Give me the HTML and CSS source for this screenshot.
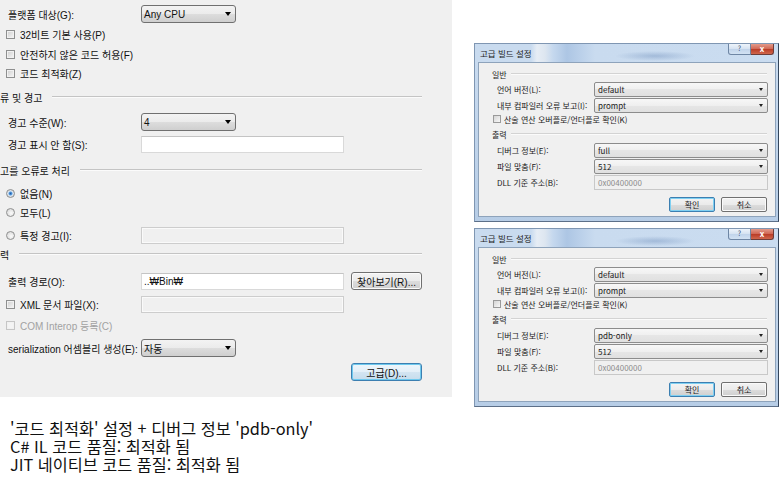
FILE: index.html
```html
<!DOCTYPE html>
<html lang="ko">
<head>
<meta charset="utf-8">
<title>빌드 설정</title>
<link rel="stylesheet" href="styles.css">
</head>
<body>
<div class="page">
  <div class="top">
    <div class="panel">
      <div class="row mt5"><span class="lbl">플랫폼 대상(G):</span><div class="combo"><span>Any CPU</span><i class="arrow"></i></div></div>
      <div class="row cbrow mt2"><span class="cb"></span><span>32비트 기본 사용(P)</span></div>
      <div class="row cbrow mt2"><span class="cb"></span><span>안전하지 않은 코드 허용(F)</span></div>
      <div class="row cbrow mt1"><span class="cb"></span><span>코드 최적화(Z)</span></div>
      <div class="sec mt6"><span>류 및 경고</span><span class="rule"></span></div>
      <div class="row mt7"><span class="lbl">경고 수준(W):</span><div class="combo"><span>4</span><i class="arrow"></i></div></div>
      <div class="row r17 mt5"><span class="lbl">경고 표시 안 함(S):</span><div class="input"></div></div>
      <div class="sec mt8"><span>고를 오류로 처리</span><span class="rule"></span></div>
      <div class="row cbrow mt5"><span class="radio on"></span><span>없음(N)</span></div>
      <div class="row cbrow mt1"><span class="radio"></span><span>모두(L)</span></div>
      <div class="row r17 mt6"><span class="optwrap"><span class="radio"></span><span>특정 경고(I):</span></span><div class="input dis"></div></div>
      <div class="sec mt1"><span>력</span><span class="rule"></span></div>
      <div class="row mt9"><span class="lbl">출력 경로(O):</span><div class="input"><span>..₩Bin₩</span></div><div class="btn">찾아보기(R)...</div></div>
      <div class="row r17 mt6"><span class="optwrap"><span class="cb"></span><span>XML 문서 파일(X):</span></span><div class="input dis"></div></div>
      <div class="row cbrow disabled mt3"><span class="cb"></span><span>COM Interop 등록(C)</span></div>
      <div class="row mt5"><span class="lbl">serialization 어셈블리 생성(E):</span><div class="combo"><span>자동</span><i class="arrow"></i></div></div>
      <div class="row end mt6"><div class="btn focus">고급(D)...</div></div>
    </div>

    <div class="dialogs">
      <div class="dlg">
        <div class="tbar">
          <span class="ttl">고급 빌드 설정</span>
          <div class="capbtns"><span class="help">?</span><span class="close">x</span></div>
        </div>
        <div class="dbody">
          <div class="dsec mt6"><span>일반</span><span class="drule"></span></div>
          <div class="drow mt3"><span class="dlbl">언어 버전(L):</span><div class="dcombo"><span>default</span><i class="darrow"></i></div></div>
          <div class="drow mt1"><span class="dlbl">내부 컴파일러 오류 보고(I):</span><div class="dcombo"><span>prompt</span><i class="darrow"></i></div></div>
          <div class="dcbrow mt1"><span class="dcb"></span><span>산술 연산 오버플로/언더플로 확인(K)</span></div>
          <div class="dsec mt5"><span>출력</span><span class="drule"></span></div>
          <div class="drow mt4"><span class="dlbl">디버그 정보(E):</span><div class="dcombo"><span>full</span><i class="darrow"></i></div></div>
          <div class="drow mt1"><span class="dlbl">파일 맞춤(F):</span><div class="dcombo"><span>512</span><i class="darrow"></i></div></div>
          <div class="drow mt1"><span class="dlbl">DLL 기준 주소(B):</span><div class="dinput"><span>0x00400000</span></div></div>
          <div class="dbtns mt7"><span class="dbtn def">확인</span><span class="dbtn">취소</span></div>
        </div>
      </div>

      <div class="dlg">
        <div class="tbar">
          <span class="ttl">고급 빌드 설정</span>
          <div class="capbtns"><span class="help">?</span><span class="close">x</span></div>
        </div>
        <div class="dbody">
          <div class="dsec mt6"><span>일반</span><span class="drule"></span></div>
          <div class="drow mt3"><span class="dlbl">언어 버전(L):</span><div class="dcombo"><span>default</span><i class="darrow"></i></div></div>
          <div class="drow mt1"><span class="dlbl">내부 컴파일러 오류 보고(I):</span><div class="dcombo"><span>prompt</span><i class="darrow"></i></div></div>
          <div class="dcbrow mt1"><span class="dcb"></span><span>산술 연산 오버플로/언더플로 확인(K)</span></div>
          <div class="dsec mt5"><span>출력</span><span class="drule"></span></div>
          <div class="drow mt4"><span class="dlbl">디버그 정보(E):</span><div class="dcombo"><span>pdb-only</span><i class="darrow"></i></div></div>
          <div class="drow mt1"><span class="dlbl">파일 맞춤(F):</span><div class="dcombo"><span>512</span><i class="darrow"></i></div></div>
          <div class="drow mt1"><span class="dlbl">DLL 기준 주소(B):</span><div class="dinput"><span>0x00400000</span></div></div>
          <div class="dbtns mt7"><span class="dbtn def">확인</span><span class="dbtn">취소</span></div>
        </div>
      </div>
    </div>
  </div>

  <div class="caption">
    <div class="cline">'코드 최적화' 설정 + 디버그 정보 'pdb-only'</div>
    <div class="cline">C# IL 코드 품질: 최적화 됨</div>
    <div class="cline">JIT 네이티브 코드 품질: 최적화 됨</div>
  </div>
</div>
</body>
</html>
```

FILE: styles.css
```css
html, body {
  margin: 0;
  padding: 0;
  background: #ffffff;
}
body {
  font-family: "Noto Sans CJK KR", "Noto Sans", sans-serif;
  color: #000;
}
.page {
  width: 783px;
}
.top {
  display: flex;
  align-items: flex-start;
}

/* ---------- left property panel ---------- */
.panel {
  width: 452px;
  height: 397px;
  box-sizing: border-box;
  background: #f0f0f0;
  font-family: "Liberation Sans", "Noto Sans CJK KR", sans-serif;
  font-size: 10px;
  color: #111;
  display: flex;
  flex-direction: column;
  overflow: hidden;
  white-space: nowrap;
}
.mt1 { margin-top: 1px; }
.mt2 { margin-top: 2px; }
.mt3 { margin-top: 3px; }
.mt4 { margin-top: 4px; }
.mt5 { margin-top: 5px; }
.mt6 { margin-top: 6px; }
.mt7 { margin-top: 7px; }
.mt8 { margin-top: 8px; }
.mt9 { margin-top: 9px; }

.row {
  display: flex;
  align-items: center;
  height: 18px;
  flex: none;
}
.row.r17 { height: 17px; }
.row.end {
  justify-content: flex-end;
  padding-right: 30px;
}
.lbl {
  width: 141px;
  box-sizing: border-box;
  padding-left: 8px;
  flex: none;
}
.cbrow {
  padding-left: 6px;
  gap: 5px;
}
.optwrap {
  width: 141px;
  box-sizing: border-box;
  padding-left: 6px;
  display: flex;
  align-items: center;
  gap: 5px;
  flex: none;
}
.disabled { color: #a2a2a2; }
.disabled .cb {
  border-color: #c6c6c6;
  background: #f4f4f4;
}

.cb {
  width: 9px;
  height: 9px;
  box-sizing: border-box;
  border: 1px solid #8e8f8f;
  background: linear-gradient(135deg, #cdcdcd, #f7f7f7);
  box-shadow: inset 0 0 0 1px #f1f1f1;
  flex: none;
}
.radio {
  width: 9px;
  height: 9px;
  box-sizing: border-box;
  border: 1px solid #8e8f8f;
  border-radius: 50%;
  background: radial-gradient(circle at 60% 60%, #fbfbfb, #d2d2d2);
  flex: none;
}
.radio.on {
  background: radial-gradient(circle, #1e5da8 0, #5b9ee0 1.6px, #dfe9f3 2.4px, #d5d5d5 4px);
}

.combo {
  width: 95px;
  height: 18px;
  box-sizing: border-box;
  border: 1px solid #707070;
  border-radius: 3px;
  background: linear-gradient(#f3f3f3, #ebebeb 50%, #dddddd 50%, #cfcfcf);
  display: flex;
  align-items: center;
  justify-content: space-between;
  padding: 0 4px 0 2px;
  flex: none;
}
.arrow {
  width: 0;
  height: 0;
  border-left: 3px solid transparent;
  border-right: 3px solid transparent;
  border-top: 4px solid #000;
}
.input {
  width: 203px;
  height: 17px;
  box-sizing: border-box;
  background: #ffffff;
  border: 1px solid #d9d9d9;
  border-top-color: #c4c4c4;
  display: flex;
  align-items: center;
  padding-left: 2px;
  flex: none;
}
.input.dis {
  background: #f0f0f0;
  border-color: #cdcdcd;
  box-shadow: inset 0 0 0 1px #fafafa;
}
.btn {
  margin-left: 7px;
  width: 71px;
  height: 18px;
  box-sizing: border-box;
  border: 1px solid #707070;
  border-radius: 3px;
  background: linear-gradient(#f3f3f3, #ebebeb 50%, #dddddd 50%, #cfcfcf);
  box-shadow: inset 0 0 0 1px #fbfbfb;
  display: flex;
  align-items: center;
  justify-content: center;
  flex: none;
}
.btn.focus {
  margin-left: 0;
  border-color: #3c7fb1;
  box-shadow: inset 0 0 0 1px #6ec9ee;
  background: linear-gradient(#eef6fb, #e3eff8 50%, #d3e5f2 50%, #c6dcec);
}

.sec {
  display: flex;
  align-items: center;
  height: 18px;
  gap: 10px;
  padding-right: 30px;
  flex: none;
}
.rule {
  flex: 1;
  height: 0;
  border-top: 1px solid #c4c4c4;
  border-bottom: 1px solid #fbfbfb;
}

/* ---------- dialogs ---------- */
.dialogs {
  margin-left: 22px;
  padding-top: 43px;
  display: flex;
  flex-direction: column;
  gap: 6px;
}
.dlg {
  width: 305px;
  height: 179px;
  box-sizing: border-box;
  border: 1px solid #7f96b2;
  border-right-color: #34465c;
  border-bottom-color: #5c6f88;
  background: linear-gradient(#cadcf0, #b7cde6);
  padding: 0 2px 4px 3px;
  display: flex;
  flex-direction: column;
  font-size: 8px;
  white-space: nowrap;
}
.tbar {
  height: 18px;
  flex: none;
  display: flex;
  align-items: flex-start;
  margin: 0 -2px 0 -3px;
  padding: 0 3px 0 3px;
  background:
    radial-gradient(ellipse 40px 5px at 180px 12px, rgba(90, 125, 175, 0.35), transparent),
    linear-gradient(90deg, #c9dbef 0, #c9dbef 56px, #e6edf5 62px, #dde6f0 70px, #c5d8ee 78px,
      #adc6e4 92px, #b9cfe9 104px, #c9dbef 120px, #cadcf0 100%);
}
.ttl {
  align-self: center;
  padding-left: 2px;
  font-size: 8.5px;
  color: #1a1a1a;
}
.capbtns {
  margin-left: auto;
  margin-right: 1px;
  display: flex;
}
.help, .close {
  width: 23px;
  height: 11px;
  box-sizing: border-box;
  text-align: center;
  line-height: 9px;
}
.help {
  border: 1px solid #6e86a4;
  border-top: none;
  border-radius: 0 0 0 3px;
  background: linear-gradient(#eef4fb, #d5e2f1 50%, #c0d3ea 50%, #d2e2f3);
  font-size: 7px;
  color: #3a4f70;
}
.close {
  border: 1px solid #6e3c38;
  border-top: none;
  border-left: none;
  border-radius: 0 0 3px 0;
  background: linear-gradient(#e39a8a, #cf6552 50%, #b83a25 50%, #d0664c);
  font-size: 8px;
  font-weight: bold;
  color: #fff;
}
.dbody {
  flex: 1;
  background: #f0f0f0;
  border: 1px solid #8ea3bb;
  padding: 0 7px 0 13px;
  display: flex;
  flex-direction: column;
  color: #1a1a1a;
}
.dsec {
  height: 10px;
  display: flex;
  align-items: center;
  gap: 4px;
  margin-right: 1px;
  flex: none;
}
.drule {
  flex: 1;
  height: 0;
  border-top: 1px solid #d3d3d3;
  border-bottom: 1px solid #fbfbfb;
}
.drow {
  height: 15px;
  display: flex;
  align-items: center;
  padding-left: 5px;
  flex: none;
}
.dlbl {
  width: 97px;
  flex: none;
}
.dcombo {
  flex: 1;
  height: 15px;
  box-sizing: border-box;
  border: 1px solid #8c8c8c;
  border-radius: 2px;
  background: linear-gradient(#f7f7f7, #efefef 50%, #e6e6e6 50%, #e0e0e0);
  display: flex;
  align-items: center;
  justify-content: space-between;
  padding: 0 4px 0 3px;
}
.darrow {
  width: 0;
  height: 0;
  border-left: 2.5px solid transparent;
  border-right: 2.5px solid transparent;
  border-top: 3px solid #222;
}
.dinput {
  flex: 1;
  height: 15px;
  box-sizing: border-box;
  border: 1px solid #c8c8c8;
  background: #f0f0f0;
  color: #8c8c8c;
  padding-left: 3px;
  display: flex;
  align-items: center;
}
.dcbrow {
  height: 10px;
  display: flex;
  align-items: center;
  gap: 3px;
  padding-left: 1px;
  flex: none;
}
.dcb {
  width: 8px;
  height: 8px;
  box-sizing: border-box;
  border: 1px solid #9a9a9a;
  background: linear-gradient(135deg, #d5d5d5, #f8f8f8);
  flex: none;
}
.dbtns {
  height: 15px;
  display: flex;
  justify-content: flex-end;
  gap: 6px;
  margin-right: 1px;
  flex: none;
}
.dbtn {
  width: 46px;
  height: 15px;
  box-sizing: border-box;
  border: 1px solid #707070;
  border-radius: 2px;
  background: linear-gradient(#f3f3f3, #ebebeb 50%, #dddddd 50%, #cfcfcf);
  box-shadow: inset 0 0 0 1px #fafafa;
  display: flex;
  align-items: center;
  justify-content: center;
}
.dbtn.def {
  border-color: #3c7fb1;
  box-shadow: inset 0 0 0 1px #7fd0f2;
}

/* ---------- caption ---------- */
.caption {
  margin-top: 12px;
  padding-left: 10px;
  font-size: 16.3px;
  color: #111;
  white-space: nowrap;
}
.cline {
  height: 18px;
  line-height: 18px;
}
```
